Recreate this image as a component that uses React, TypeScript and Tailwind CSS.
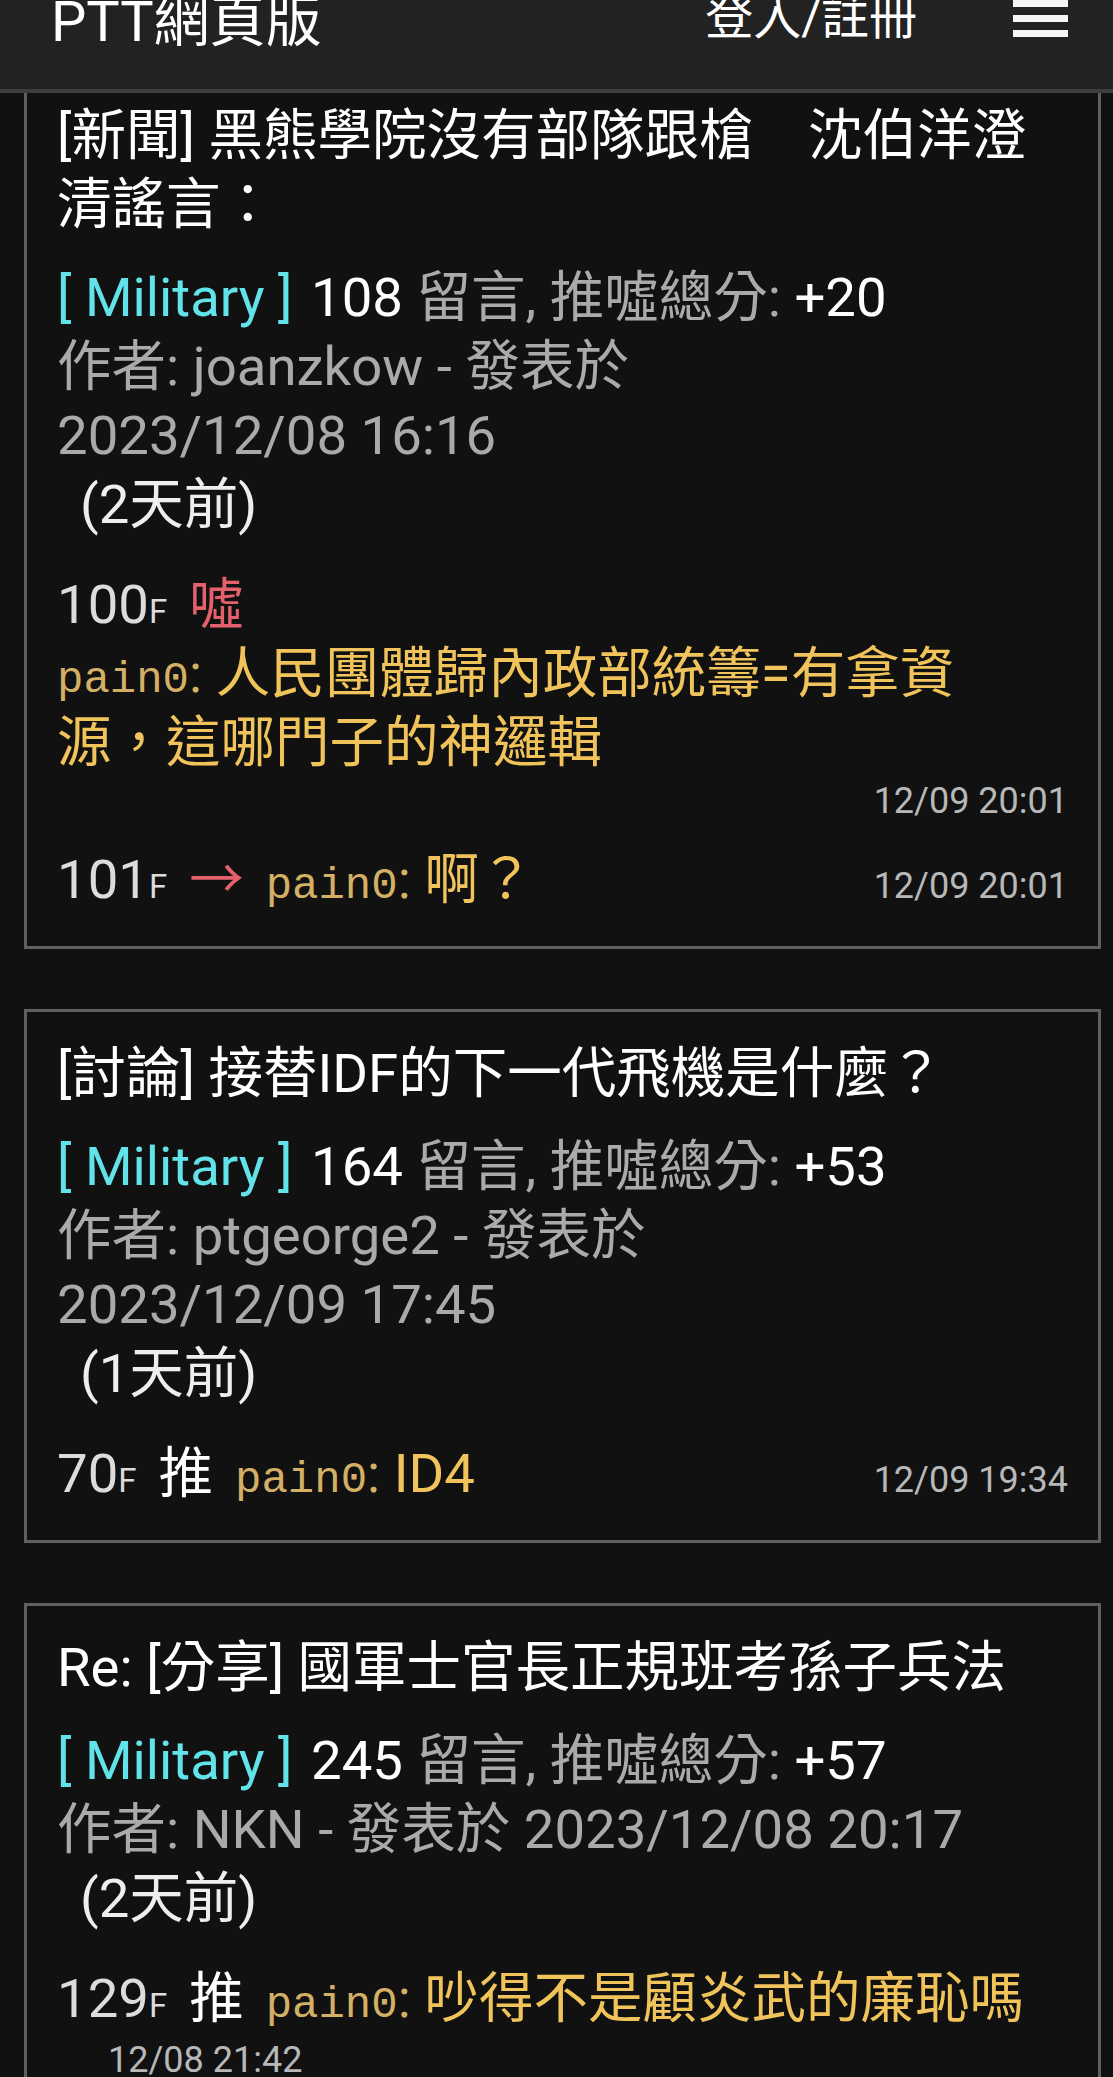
import type { ReactNode } from 'react';

type Post = {
  title: string[];
  count: number;
  score: string;
  author: string;
  date: string;
  dateOnNewLine: boolean;
  ago: string;
};

const posts: Post[] = [
  {
    title: ['[新聞] 黑熊學院沒有部隊跟槍　沈伯洋澄', '清謠言：'],
    count: 108,
    score: '+20',
    author: 'joanzkow',
    date: '2023/12/08 16:16',
    dateOnNewLine: true,
    ago: '(2天前)',
  },
  {
    title: ['[討論] 接替IDF的下一代飛機是什麼？'],
    count: 164,
    score: '+53',
    author: 'ptgeorge2',
    date: '2023/12/09 17:45',
    dateOnNewLine: true,
    ago: '(1天前)',
  },
  {
    title: ['Re: [分享] 國軍士官長正規班考孫子兵法'],
    count: 245,
    score: '+57',
    author: 'NKN',
    date: '2023/12/08 20:17',
    dateOnNewLine: false,
    ago: '(2天前)',
  },
];

const userInline = "ml-[22px] font-['Liberation_Mono','DejaVu_Sans_Mono',monospace] text-[44px] leading-none text-[#d4b064]";
const userBlock = "font-['Liberation_Mono','DejaVu_Sans_Mono',monospace] text-[44px] leading-none text-[#d4b064]";

function Floor({ n }: { n: number }) {
  return (
    <span className="text-[#dcdcdc]">
      {n}
      <span className="text-[33px] leading-none">F</span>
    </span>
  );
}

function Tag({ kind }: { kind: '推' | '噓' | '→' }) {
  if (kind === '推') {
    return <span className="ml-[22px] text-white">推</span>;
  }
  if (kind === '噓') {
    return <span className="ml-[22px] text-[#e4606d]">噓</span>;
  }
  return <span className="ml-[22px] font-['Noto_Sans_CJK_TC',sans-serif] leading-none text-[#e4606d]">→</span>;
}

function User({ name, inline = true }: { name: string; inline?: boolean }) {
  return (
    <>
      <span className={inline ? userInline : userBlock}>{name}</span>
      <span className="text-[#d4b064]">: </span>
    </>
  );
}

function Time({ children }: { children: ReactNode }) {
  return <span className="ml-auto text-[36px] leading-none text-[#b8b8b8]">{children}</span>;
}

function Card({ post, first, children }: { post: Post; first?: boolean; children: ReactNode }) {
  return (
    <section
      className={
        first
          ? 'ml-[24px] mr-[12px] border-x-[3px] border-b-[3px] border-[#606060] px-[30px] pt-[8px] pb-[32px]'
          : 'mt-[60px] ml-[24px] mr-[12px] border-[3px] border-[#606060] px-[30px] pt-[27px] pb-[32px]'
      }
    >
      <h2 className="text-white">
        {post.title.map((line) => (
          <div key={line} className="whitespace-nowrap">
            {line}
          </div>
        ))}
      </h2>

      <div className="mt-[24px] whitespace-nowrap">
        <span className="text-[#62e3ea]">[ Military ]</span>{' '}
        <span className="ml-[5px] text-white">{post.count}</span>{' '}
        <span className="text-[#aaaaaa]">留言, 推噓總分:</span>{' '}
        <span className="text-white">{post.score}</span>
      </div>

      {post.dateOnNewLine ? (
        <>
          <div className="text-[#aaaaaa]">作者: {post.author} - 發表於</div>
          <div className="text-[#aaaaaa]">{post.date}</div>
        </>
      ) : (
        <div className="whitespace-nowrap text-[#aaaaaa]">
          作者: {post.author} - 發表於 {post.date}
        </div>
      )}
      <div className="pl-[23px] text-[#eeeeee]">{post.ago}</div>

      <div className="mt-[31px]">{children}</div>
    </section>
  );
}

export default function App() {
  return (
    <div className="min-h-screen overflow-hidden bg-[#111111] font-['Roboto','Noto_Sans_CJK_TC',sans-serif] text-[54.5px] leading-[69px]">
      <header className="flex h-[93px] items-start border-b-[4px] border-[#3e3e3e] bg-[#222222] pl-[51px] pr-[45px]">
        <div className="-mt-[6px] text-[56px] leading-[56px] text-white">PTT網頁版</div>
        <div className="-mt-[6px] ml-auto text-[48px] leading-[48px] text-white">登入/註冊</div>
        <div className="ml-[96px] flex w-[55px] flex-col gap-[8px]">
          <span className="h-[7px] bg-[#f5f5f5]" />
          <span className="h-[7px] bg-[#f5f5f5]" />
          <span className="h-[7px] bg-[#f5f5f5]" />
        </div>
      </header>

      <Card post={posts[0]} first>
        <div>
          <Floor n={100} />
          <Tag kind="噓" />
        </div>
        <div className="whitespace-nowrap">
          <User name="pain0" inline={false} />
          <span className="text-[#f0c45a]">人民團體歸內政部統籌=有拿資</span>
        </div>
        <div className="whitespace-nowrap text-[#f0c45a]">源，這哪門子的神邏輯</div>
        <div className="mt-[3px] text-right text-[36px] leading-[42px] text-[#b8b8b8]">12/09 20:01</div>
        <div className="mt-[23px] flex items-baseline">
          <span className="whitespace-nowrap">
            <Floor n={101} />
            <Tag kind="→" />
            <User name="pain0" />
            <span className="text-[#f0c45a]">啊？</span>
          </span>
          <Time>12/09 20:01</Time>
        </div>
      </Card>

      <Card post={posts[1]}>
        <div className="flex items-baseline">
          <span className="whitespace-nowrap">
            <Floor n={70} />
            <Tag kind="推" />
            <User name="pain0" />
            <span className="text-[#f0c45a]">ID4</span>
          </span>
          <Time>12/09 19:34</Time>
        </div>
      </Card>

      <Card post={posts[2]}>
        <div className="whitespace-nowrap">
          <Floor n={129} />
          <Tag kind="推" />
          <User name="pain0" />
          <span className="text-[#f0c45a]">吵得不是顧炎武的廉恥嗎</span>
        </div>
        <div className="mt-[6px] pl-[51px] text-[36px] leading-[42px] text-[#b8b8b8]">12/08 21:42</div>
      </Card>
    </div>
  );
}
